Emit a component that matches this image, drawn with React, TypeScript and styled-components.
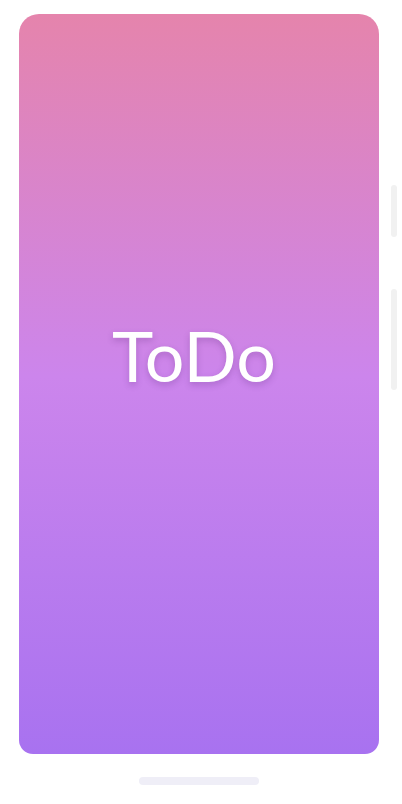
import React from "react";
import styled, { createGlobalStyle } from "styled-components";

const Global = createGlobalStyle`
  html, body { margin: 0; padding: 0; background: #ffffff; }
  body { font-family: "Lato", "Noto Sans", sans-serif; }
`;

const Page = styled.div`
  width: 402px;
  height: 804px;
  display: grid;
  grid-template-columns: 19px 360px 12px 6px 5px;
  grid-template-rows: 14px 740px 1fr;
  background: #ffffff;
  overflow: hidden;
`;

const Screen = styled.main`
  grid-column: 2;
  grid-row: 2;
  border-radius: 20px 20px 14px 14px;
  background: linear-gradient(180deg, #e584ac 0%, #cc85ec 49%, #a872f0 100%);
  display: flex;
  align-items: center;
  justify-content: center;
`;

const Title = styled.h1`
  margin: 0 10px 58px 0;
  font-family: "Lato", "Noto Sans", sans-serif;
  font-weight: 400;
  font-size: 70px;
  line-height: 1;
  color: #ffffff;
  letter-spacing: 0;
  text-shadow: 0 3px 6px rgba(80, 30, 110, 0.25);
`;

const SideRail = styled.div`
  grid-column: 4;
  grid-row: 2;
  display: flex;
  flex-direction: column;
  gap: 52px;
  padding-top: 171px;
`;

const SideButton = styled.div<{ $h: number }>`
  width: 6px;
  height: ${(p) => p.$h}px;
  border-radius: 3px;
  background: #f1f1f1;
`;

const Bottom = styled.div`
  grid-column: 1 / -1;
  grid-row: 3;
  display: flex;
  justify-content: center;
  padding: 23px 4px 0 0;
`;

const HomeIndicator = styled.div`
  width: 120px;
  height: 8px;
  border-radius: 4px;
  background: #efeef7;
`;

export default function App() {
  return (
    <>
      <Global />
      <Page>
        <Screen>
          <Title>ToDo</Title>
        </Screen>
        <SideRail>
          <SideButton $h={52} />
          <SideButton $h={101} />
        </SideRail>
        <Bottom>
          <HomeIndicator />
        </Bottom>
      </Page>
    </>
  );
}
